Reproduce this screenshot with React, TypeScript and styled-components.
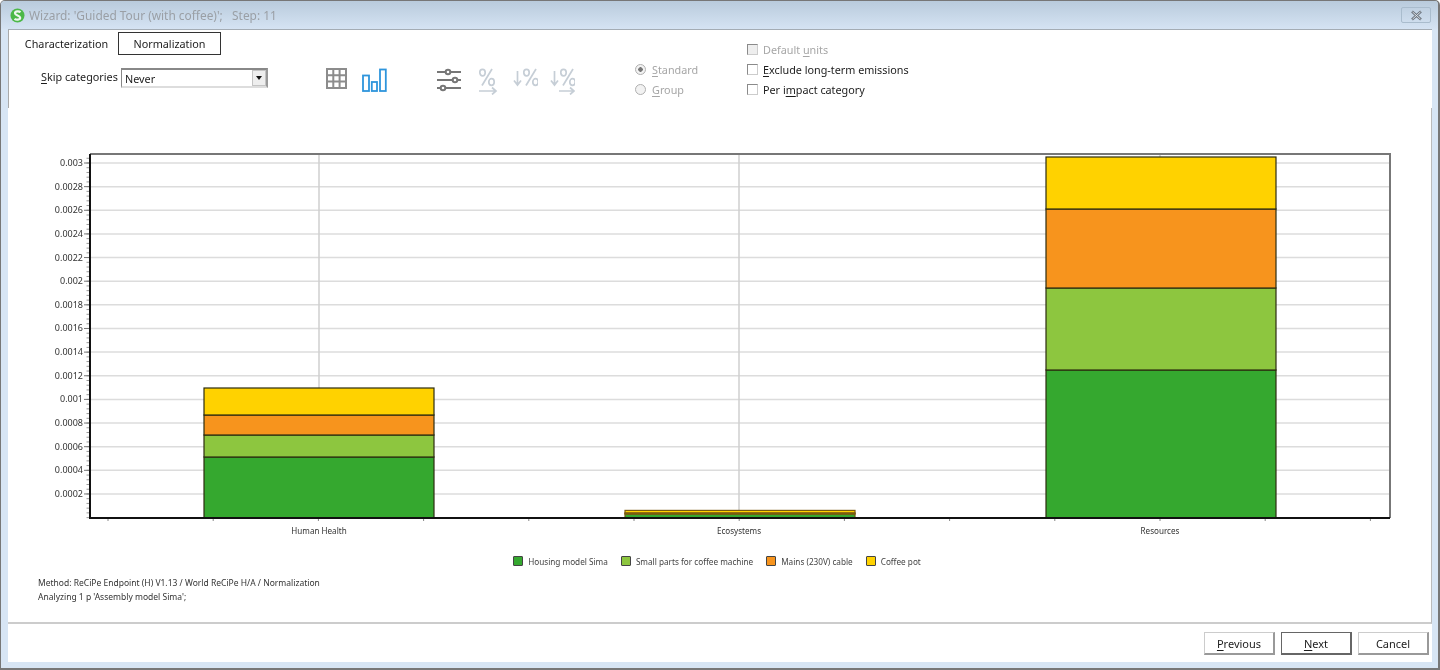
import React from "react";
import styled, { createGlobalStyle } from "styled-components";

const Global = createGlobalStyle`
  html, body { margin: 0; padding: 0; background: #fff; }
  body { font-family: "Noto Sans", "Open Sans", sans-serif; color: #1c1c1c; }
`;

const Frame = styled.div`
  width: 1440px;
  height: 670px;
  box-sizing: border-box;
  overflow: hidden;
  display: flex;
  flex-direction: column;
  background: #d7e5f4;
  border: 1px solid #777;
  border-width: 1px 2px 2px 1px;
  border-radius: 5px 5px 0 0;
  filter: blur(0.45px);
`;

const TitleBar = styled.div`
  height: 28px;
  flex: none;
  display: flex;
  align-items: center;
  padding: 0 7px 0 9px;
  background: linear-gradient(#b9cbdc, #d5e3f3);
  color: #9a9fa5;
  font-size: 11.9px;
  gap: 4px;
`;

const TitleText = styled.span`
  flex: 1;
  white-space: pre;
`;

const CloseButton = styled.div`
  width: 30px;
  height: 16px;
  box-sizing: border-box;
  border: 1px solid #a9bccd;
  border-radius: 2px;
  display: flex;
  align-items: center;
  justify-content: center;
`;

const Body = styled.div`
  flex: 1;
  margin: 0 6px 6px 7px;
  background: #fff;
  border-top: 1px solid #a4acb4;
  display: flex;
  flex-direction: column;
`;

const Toolbar = styled.div`
  height: 78px;
  flex: none;
  box-sizing: border-box;
  display: flex;
  border-left: 1px solid #aaa;
`;

const ToolbarMain = styled.div`
  width: 738px;
  flex: none;
  display: flex;
  flex-direction: column;
`;

const Tabs = styled.div`
  display: flex;
  margin: 2px 0 0 6px;
`;

const Tab = styled.div<{ $active?: boolean }>`
  height: 23px;
  width: 103px;
  box-sizing: border-box;
  display: flex;
  align-items: center;
  justify-content: center;
  font-size: 10.8px;
  border: 1.5px solid ${(p) => (p.$active ? "#333" : "transparent")};
`;

const Controls = styled.div`
  display: flex;
  align-items: flex-start;
  margin: 13px 0 0 32px;
`;

const SkipLabel = styled.label`
  font-size: 10.8px;
  width: 80px;
  flex: none;
  line-height: 18px;
  white-space: nowrap;
`;

const Combo = styled.div`
  width: 147px;
  height: 20px;
  flex: none;
  box-sizing: border-box;
  display: flex;
  align-items: center;
  justify-content: space-between;
  border-style: solid;
  border-width: 2px 2px 2px 1px;
  border-color: #888 #999 #ddd #888;
  padding: 0 0 0 3px;
  font-size: 10.8px;
`;

const ComboArrow = styled.div`
  width: 14px;
  height: 16px;
  background: #eee;
  border: 1px solid #c4c4c4;
  box-sizing: border-box;
  display: flex;
  align-items: center;
  justify-content: center;
  &::after {
    content: "";
    border: 3.5px solid transparent;
    border-top: 4px solid #111;
    border-bottom: 0;
  }
`;

const IconSlot = styled.div<{ $gap: number }>`
  flex: none;
  margin-left: ${(p) => p.$gap}px;
  display: flex;
  svg { display: block; }
`;

const Options = styled.div<{ $left: number; $top: number }>`
  display: flex;
  flex-direction: column;
  gap: 3.4px;
  margin: ${(p) => p.$top}px 0 0 ${(p) => p.$left}px;
  flex: none;
`;

const Option = styled.div<{ $off?: boolean }>`
  display: flex;
  align-items: center;
  height: 17px;
  font-size: 10.8px;
  white-space: nowrap;
  color: ${(p) => (p.$off ? "#a6a6a6" : "#1c1c1c")};
`;

const Radio = styled.span<{ $on?: boolean }>`
  width: 11px;
  height: 11px;
  border-radius: 50%;
  border: 1px solid #b0b0b0;
  box-sizing: border-box;
  margin-right: 6px;
  background: ${(p) => (p.$on ? "radial-gradient(circle, #777 0 2px, #f2f2f2 2.5px)" : "#f2f2f2")};
  flex: none;
`;

const Check = styled.span<{ $off?: boolean }>`
  width: 11px;
  height: 11px;
  box-sizing: border-box;
  border: 1px solid #8a8a8a;
  border-right-color: #ccc;
  border-bottom-color: #ccc;
  margin-right: 5px;
  background: ${(p) => (p.$off ? "#eee" : "#fff")};
  flex: none;
`;

const ChartPanel = styled.div`
  flex: 1;
  min-height: 0;
  display: flex;
  flex-direction: column;
  border-right: 1px solid #bbb;
  border-bottom: 2px solid #ccc;
  padding-top: 38px;
  svg { display: block; flex: none; }
  text { font-family: "Noto Sans", sans-serif; fill: #333; }
`;

const Legend = styled.div`
  display: flex;
  justify-content: center;
  align-items: center;
  margin-top: 14px;
  padding-right: 5px;
  gap: 13px;
  font-size: 8.2px;
  color: #444;
  height: 14px;
`;

const LegendItem = styled.div`
  display: flex;
  align-items: center;
  gap: 5px;
`;

const Swatch = styled.span<{ $color: string }>`
  width: 10px;
  height: 10px;
  box-sizing: border-box;
  background: ${(p) => p.$color};
  border: 1px solid #444;
  border-radius: 1px;
`;

const Notes = styled.div`
  margin: 8px 0 0 30px;
  font-size: 8.5px;
  line-height: 14px;
  color: #333;
`;

const Footer = styled.div`
  height: 38px;
  flex: none;
  display: flex;
  justify-content: flex-end;
  align-items: flex-start;
  gap: 6px;
  padding: 8px 3px 0 0;
  box-sizing: border-box;
`;

const Button = styled.div<{ $primary?: boolean }>`
  width: 71px;
  height: 23px;
  box-sizing: border-box;
  display: flex;
  align-items: center;
  justify-content: center;
  font-size: 11px;
  background: #fff;
  border: 1px solid #ccc;
  border-right: 2px solid ${(p) => (p.$primary ? "#666" : "#999")};
  border-bottom: 2px solid ${(p) => (p.$primary ? "#666" : "#999")};
  border-top-color: ${(p) => (p.$primary ? "#666" : "#ccc")};
  border-left-color: ${(p) => (p.$primary ? "#666" : "#ccc")};
`;

const U = styled.span`
  text-decoration: underline;
  text-underline-offset: 1.5px;
  text-decoration-thickness: 1px;
`;

const Logo = () => (
  <svg width="15" height="15" viewBox="0 0 15 15" aria-hidden>
    <circle cx="7.5" cy="7.5" r="7" fill="#4cb848" />
    <path d="M10.5 4.2C9 2.8 5 3 5 5.2c0 2.5 5.2 2 5.2 4.6 0 2.2-4 2.4-5.7 1" fill="none" stroke="#eef6ee" strokeWidth="2.2" />
  </svg>
);

const CloseIcon = () => (
  <svg width="13" height="11" viewBox="0 0 13 11" aria-hidden>
    <path d="M2 1.5 11 9.5M11 1.5 2 9.5" stroke="#6d7680" strokeWidth="2.6" />
    <path d="M2.6 2 10.4 9M10.4 2 2.6 9" stroke="#e4e9ee" strokeWidth="0.9" />
  </svg>
);

const GridIcon = () => (
  <svg width="21" height="21" viewBox="0 0 21 21" aria-hidden>
    <path d="M1 1h19v19H1zM7.3 1v19M13.6 1v19M1 7.3h19M1 13.6h19" fill="none" stroke="#8c8c8c" strokeWidth="2" />
  </svg>
);

const BarsIcon = () => (
  <svg width="25" height="24" viewBox="0 0 25 24" aria-hidden>
    <g fill="none" stroke="#2e95dc" strokeWidth="1.8">
      <rect x="1" y="7.5" width="6" height="15.5" />
      <rect x="9.8" y="14" width="5.2" height="9" />
      <rect x="18" y="1.5" width="5.8" height="21.5" />
    </g>
  </svg>
);

const SlidersIcon = () => (
  <svg width="24" height="24" viewBox="0 0 24 24" aria-hidden>
    <g stroke="#777" strokeWidth="2" fill="#fff">
      <path d="M0 4h24M0 12h24M0 20h24" />
      <circle cx="11" cy="4" r="2.3" />
      <circle cx="18" cy="12" r="2.3" />
      <circle cx="6" cy="20" r="2.3" />
    </g>
  </svg>
);

const PercentIcon = ({ down, arrow, width }: { down?: boolean; arrow?: boolean; width: number }) => {
  const dx = down ? 9 : 0;
  return (
    <svg width={width} height="27" viewBox={`0 0 ${width} 27`} aria-hidden>
      <g fill="none" stroke="#c6ced6" strokeWidth="1.7">
        {down && <path d="M4.5 3v14M1 12.5 4.5 17 8 12.5" />}
        <ellipse cx={dx + 4.5} cy="4.6" rx="2.7" ry="3.3" />
        <ellipse cx={dx + 13.5} cy="14" rx="2.7" ry="3.3" />
        <path d={`M${dx + 14} 1 ${dx + 4} 17.5`} />
        {arrow && <path d={`M${dx ? 9 : 1} 23h${dx ? 15 : 17}M${dx ? 20 : 14} 19.5 ${dx ? 24 : 18} 23l-4 3.5`} />}
      </g>
    </svg>
  );
};

const AxisLabel = styled.text<{ $size: number }>`
  font-size: ${(p) => p.$size}px;
`;

const PLOT = { l: 90, r: 1390, t: 154, b: 518 };
const yOf = (v: number) => 517.6 - (v / 0.0002) * 23.64;

const series = ["#35a82f", "#8dc63f", "#f7941d", "#ffd200"];
const bars = [
  { x: 204, label: "Human Health", cx: 319, edge: "#2c2c10", tops: [457, 435, 415, 388] },
  { x: 625, label: "Ecosystems", cx: 739, edge: "#7a5a10", tops: [514, 513.6, 512.8, 510.4] },
  { x: 1046, label: "Resources", cx: 1160, edge: "#2c2c10", tops: [370, 288, 209, 157] },
];

const yLabels = ["0.0002", "0.0004", "0.0006", "0.0008", "0.001", "0.0012", "0.0014", "0.0016", "0.0018", "0.002", "0.0022", "0.0024", "0.0026", "0.0028", "0.003"];

const Chart = () => {
  const minor: number[] = [];
  for (let y = 517.6; y > 156; y -= 23.64 / 5) minor.push(y);
  const xTicks: number[] = [];
  for (let x = 108; x < 1390; x += 105.2) xTicks.push(x);
  return (
    <svg width="1423" height="394" viewBox="8 146 1423 394" role="img" aria-label="Normalized impact chart">
      {yLabels.map((_, i) => (
        <line key={i} x1={PLOT.l} x2={PLOT.r} y1={yOf((i + 1) * 0.0002)} y2={yOf((i + 1) * 0.0002)} stroke="#dcdcdc" strokeWidth="1.5" />
      ))}
      {bars.map((b) => (
        <line key={b.cx} x1={b.cx} x2={b.cx} y1={PLOT.t} y2={PLOT.b} stroke="#cfcfcf" strokeWidth="1.5" />
      ))}
      {minor.map((y) => (
        <line key={y} x1="86.5" x2="90" y1={y} y2={y} stroke="#999" strokeWidth="1" />
      ))}
      {yLabels.map((t, i) => (
        <g key={t}>
          <line x1="84" x2="90" y1={yOf((i + 1) * 0.0002)} y2={yOf((i + 1) * 0.0002)} stroke="#777" strokeWidth="1" />
          <AxisLabel $size={9} x="83" y={yOf((i + 1) * 0.0002) + 3} textAnchor="end">{t}</AxisLabel>
        </g>
      ))}
      {xTicks.map((x) => (
        <line key={x} x1={x} x2={x} y1={PLOT.b} y2={PLOT.b + 3} stroke="#888" strokeWidth="1" />
      ))}
      {bars.map((b) =>
        b.tops.map((top, i) => (
          <rect key={i} x={b.x} y={top} width="230" height={(i === 0 ? 518 : b.tops[i - 1]) - top} fill={series[i]} stroke={b.edge} strokeWidth="1.2" />
        ))
      )}
      <path d={`M${PLOT.l} ${PLOT.t}H${PLOT.r}V${PLOT.b}`} fill="none" stroke="#777" strokeWidth="2" />
      <path d={`M${PLOT.l} ${PLOT.t}V${PLOT.b}H${PLOT.r}`} fill="none" stroke="#111" strokeWidth="2" />
      {bars.map((b) => (
        <AxisLabel $size={8.1} key={b.label} x={b.cx} y="534" textAnchor="middle">{b.label}</AxisLabel>
      ))}
    </svg>
  );
};

export default function App() {
  return (
    <>
      <Global />
      <Frame>
        <TitleBar>
          <Logo />
          <TitleText>{"Wizard: 'Guided Tour (with coffee)';   Step: 11"}</TitleText>
          <CloseButton><CloseIcon /></CloseButton>
        </TitleBar>
        <Body>
          <Toolbar>
            <ToolbarMain>
              <Tabs>
                <Tab>Characterization</Tab>
                <Tab $active>Normalization</Tab>
              </Tabs>
              <Controls>
                <SkipLabel><U>S</U>kip categories</SkipLabel>
                <Combo>Never<ComboArrow /></Combo>
                <IconSlot $gap={58}><GridIcon /></IconSlot>
                <IconSlot $gap={15}><BarsIcon /></IconSlot>
                <IconSlot $gap={50}><SlidersIcon /></IconSlot>
                <IconSlot $gap={17}><PercentIcon arrow width={20} /></IconSlot>
                <IconSlot $gap={15}><PercentIcon down width={25} /></IconSlot>
                <IconSlot $gap={12}><PercentIcon down arrow width={25} /></IconSlot>
                <Options $left={60} $top={-7}>
                  <Option $off><Radio $on /><span><U>S</U>tandard</span></Option>
                  <Option $off><Radio /><span><U>G</U>roup</span></Option>
                </Options>
              </Controls>
            </ToolbarMain>
            <Options $left={0} $top={10.5}>
              <Option $off><Check $off /><span>Default <U>u</U>nits</span></Option>
              <Option><Check /><span><U>E</U>xclude long-term emissions</span></Option>
              <Option><Check /><span>Per i<U>m</U>pact category</span></Option>
            </Options>
          </Toolbar>
          <ChartPanel>
            <Chart />
            <Legend>
              <LegendItem><Swatch $color={series[0]} />Housing model Sima</LegendItem>
              <LegendItem><Swatch $color={series[1]} />Small parts for coffee machine</LegendItem>
              <LegendItem><Swatch $color={series[2]} />Mains (230V) cable</LegendItem>
              <LegendItem><Swatch $color={series[3]} />Coffee pot</LegendItem>
            </Legend>
            <Notes>
              <div>Method: ReCiPe Endpoint (H) V1.13 / World ReCiPe H/A / Normalization</div>
              <div>Analyzing 1 p 'Assembly model Sima';</div>
            </Notes>
          </ChartPanel>
          <Footer>
            <Button><span><U>P</U>revious</span></Button>
            <Button $primary><span><U>N</U>ext</span></Button>
            <Button>Cancel</Button>
          </Footer>
        </Body>
      </Frame>
    </>
  );
}
